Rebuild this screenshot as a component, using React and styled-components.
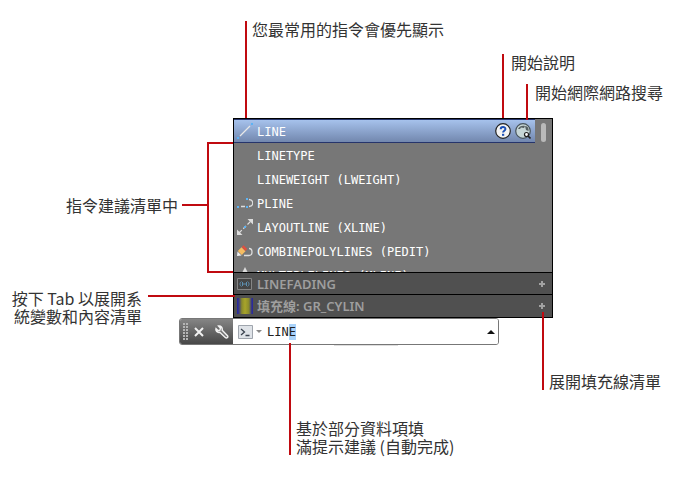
import React, { useState } from "react";
import styled, { createGlobalStyle } from "styled-components";

const GlobalStyle = createGlobalStyle`
  * {
    box-sizing: border-box;
  }

  body {
    margin: 0;
    background: #fff;
    color: #333;
    font-family: "Noto Sans CJK TC", "Noto Sans", sans-serif;
    font-size: 16px;
    line-height: 18px;
  }
`;

const commands = [
  { name: "LINE", icon: <LineIcon /> },
  { name: "LINETYPE" },
  { name: "LINEWEIGHT (LWEIGHT)" },
  { name: "PLINE", icon: <PlineIcon /> },
  { name: "LAYOUTLINE (XLINE)", icon: <XlineIcon /> },
  { name: "COMBINEPOLYLINES (PEDIT)", icon: <PeditIcon /> },
  { name: "MULTIPLELINES (MLINE)", icon: <ConeIcon /> },
];

function App() {
  const [value, setValue] = useState("LINE");

  return (
    <Page>
      <GlobalStyle />
      <Figure>
        <Suggestions>
          <CommandArea>
            <CommandList>
              {commands.map((item, index) => (
                <CommandRow key={item.name} $active={index === 0}>
                  <IconSlot>{item.icon}</IconSlot>
                  <CommandName>{item.name}</CommandName>
                  {index === 0 && (
                    <RowActions>
                      <RoundButton type="button" aria-label="說明">
                        <HelpIcon />
                      </RoundButton>
                      <RoundButton type="button" aria-label="網際網路搜尋">
                        <GlobeIcon />
                      </RoundButton>
                    </RowActions>
                  )}
                </CommandRow>
              ))}
            </CommandList>
            <ScrollTrack>
              <ScrollThumb />
            </ScrollTrack>
          </CommandArea>
          <Category type="button">
            <IconSlot>
              <VariableIcon />
            </IconSlot>
            <CategoryName>LINEFADING</CategoryName>
            <PlusIcon />
          </Category>
          <Category type="button">
            <IconSlot>
              <GradientIcon />
            </IconSlot>
            <CategoryName>填充線: GR_CYLIN</CategoryName>
            <PlusIcon />
          </Category>
        </Suggestions>

        <CommandLine>
          <BarTools>
            <GripIcon />
            <ToolButton type="button" aria-label="關閉">
              <CloseIcon />
            </ToolButton>
            <ToolButton type="button" aria-label="自訂">
              <WrenchIcon />
            </ToolButton>
          </BarTools>
          <Entry>
            <PromptButton type="button" aria-label="最近使用的指令">
              <PromptIcon />
            </PromptButton>
            <CommandInput
              aria-label="指令"
              value={value}
              onChange={(e) => setValue(e.target.value)}
            />
            <ToolButton type="button" aria-label="歷程記錄">
              <UpIcon />
            </ToolButton>
          </Entry>
        </CommandLine>
        <Underlay />

        <FrequentNote>您最常用的指令會優先顯示</FrequentNote>
        <HelpNote>開始說明</HelpNote>
        <SearchNote>開始網際網路搜尋</SearchNote>
        <ListNote>指令建議清單中</ListNote>
        <ListBracket />
        <TabNote>
          按下 Tab 以展開系
          <br />
          統變數和內容清單
        </TabNote>
        <HatchNote>展開填充線清單</HatchNote>
        <CompleteNote>
          基於部分資料項填
          <br />
          滿提示建議 (自動完成)
        </CompleteNote>
      </Figure>
    </Page>
  );
}

export default App;

function LineIcon() {
  return (
    <svg width="16" height="16" viewBox="0 0 16 16">
      <path d="M3 13L13 3" stroke="#e8e8e8" strokeWidth="1.3" />
      <path d="M0 14h2v2H0zM14 0h2v2h-2z" fill="#5cb3f5" />
    </svg>
  );
}

function PlineIcon() {
  return (
    <svg width="16" height="16" viewBox="0 0 16 16">
      <path d="M4 11.500h4M12 4.500c5 .5 5 6.500 0 7" stroke="#ddd" strokeWidth="1.300" fill="none" />
      <path d="M0 11h2v2H0zM9 11h2v2H9zM9 3h2v2H9z" fill="#5cb3f5" />
    </svg>
  );
}

function XlineIcon() {
  return (
    <svg width="16" height="16" viewBox="0 0 16 16">
      <path d="M2 14L14 2" stroke="#ddd" strokeWidth="1.2" strokeDasharray="4 2" />
      <path d="M16 0v5.500L10.500 0zM0 16v-5.500L5.500 16z" fill="#ddd" />
      <path d="M7 7h2v2H7z" fill="#5cb3f5" />
    </svg>
  );
}

function PeditIcon() {
  return (
    <svg width="16" height="16" viewBox="0 0 16 16">
      <path d="M7 12.500h5c4 0 4-7 0-7" stroke="#ddd" strokeWidth="1.300" fill="none" />
      <path d="M0 13l.5-4.500L4.500 12.500z" fill="#f2f2f2" />
      <path d="M.8 8L4.500 4.300l4 4L4.800 12z" fill="#f6bd62" />
      <path d="M4.800 4L6.500 2.300l3.700 3.700-1.700 1.900z" fill="#e0503f" />
    </svg>
  );
}

function ConeIcon() {
  return (
    <svg width="16" height="16" viewBox="0 0 16 16">
      <path d="M8 0l3 6H5z" fill="#ddd" />
    </svg>
  );
}

function HelpIcon() {
  return (
    <svg width="16" height="16" viewBox="0 0 16 16">
      <circle cx="8" cy="8" r="7.300" fill="#f4f4f4" stroke="#222" strokeWidth="1.200" />
      <path
        d="M5.700 6.200C5.700 3.200 10.400 3.200 10.400 6c0 1.700-2.300 1.700-2.300 3.600"
        fill="none"
        stroke="#1b4fb5"
        strokeWidth="2"
      />
      <path d="M7 10.800h2.200v2H7z" fill="#1b4fb5" />
    </svg>
  );
}

function GlobeIcon() {
  return (
    <svg width="16" height="16" viewBox="0 0 16 16">
      <circle cx="8" cy="8" r="7.300" fill="#c6d6d6" stroke="#47545c" strokeWidth="1.200" />
      <path d="M3 6c1-3 5-4 7-3l-1 2-3-.5L5 6zM10 3c3 0 4 3 3.500 5L11 7z" fill="#555f61" />
      <path d="M13 13l2.500 2.500" stroke="#222" strokeWidth="1.600" />
      <circle cx="11.500" cy="11.500" r="2" fill="#fff" stroke="#222" strokeWidth="1.200" />
    </svg>
  );
}

function VariableIcon() {
  return (
    <svg width="16" height="16" viewBox="0 0 16 16">
      <path d="M.5 2.500h14v11H.5z" fill="#454545" stroke="#858585" />
      <path
        d="M4.500 5.500c-2 1-2 4 0 5M10.500 5.500c2 1 2 4 0 5M5.500 6v4M9.500 6v4M6 8h3"
        fill="none"
        stroke="#5d8fb0"
      />
    </svg>
  );
}

function GradientIcon() {
  return (
    <svg width="16" height="16" viewBox="0 0 16 16">
      <defs>
        <linearGradient id="cylinder">
          <stop offset="0" stopColor="#2222a8" />
          <stop offset=".12" stopColor="#3a3a80" />
          <stop offset=".3" stopColor="#8a8a2c" />
          <stop offset=".5" stopColor="#a8a42a" />
          <stop offset=".75" stopColor="#8a8a2c" />
          <stop offset=".9" stopColor="#3a3a80" />
          <stop offset="1" stopColor="#2222a8" />
        </linearGradient>
      </defs>
      <path d="M0 0h16v16H0z" fill="url(#cylinder)" />
    </svg>
  );
}

function PlusIcon() {
  return (
    <svg width="6" height="6" viewBox="0 0 6 6">
      <path d="M2 0h2v2h2v2H4v2H2V4H0V2h2z" fill="#a2a2a2" />
    </svg>
  );
}

function GripIcon() {
  return (
    <svg width="5" height="18" viewBox="0 0 5 18">
      {[0, 3, 6, 9, 12, 15].map((y) => (
        <path key={y} d={`M0 ${y}h2v2H0zM3 ${y}h2v2H3z`} fill="#b5b5b5" />
      ))}
    </svg>
  );
}

function CloseIcon() {
  return (
    <svg width="10" height="10" viewBox="0 0 10 10">
      <path d="M1 1l8 8M9 1L1 9" stroke="#f2f2f2" strokeWidth="2" />
    </svg>
  );
}

function WrenchIcon() {
  return (
    <svg width="14" height="14" viewBox="0 0 14 14">
      <path
        d="M3.500 1l2 2.200-.6 1.900-1.900.5L1 3.600C.4 6 2.200 7.900 4.800 7.300l5.700 5.400c1.500 1 3-.6 2-2L7.200 5.200C7.700 2.500 6 .6 3.500 1z"
        fill="#777"
        stroke="#f2f2f2"
        strokeWidth="1.400"
      />
    </svg>
  );
}

function PromptIcon() {
  return (
    <svg width="24" height="14" viewBox="0 0 24 14">
      <path d="M.5.5h14v13H.5z" fill="#dfe3e8" stroke="#9fa5ad" />
      <path d="M3 4l3.500 3L3 10M7.500 10.500h4" fill="none" stroke="#39424e" strokeWidth="1.300" />
      <path d="M18 5h6l-3 3z" fill="#888" />
    </svg>
  );
}

function UpIcon() {
  return (
    <svg width="8" height="4" viewBox="0 0 8 4">
      <path d="M0 4l4-4 4 4z" fill="#111" />
    </svg>
  );
}

const Page = styled.main`
  display: grid;
  grid-template-columns: minmax(179px, 179fr) minmax(374px, 374fr) minmax(
      124px,
      124fr
    );
  padding: 118px 0 132px;
`;

/* Callouts are anchored to this box so that they follow the panel. */
const Figure = styled.section`
  grid-column: 2;
  position: relative;
`;

const Suggestions = styled.div`
  margin-left: 54px;
  border: 1px solid #000;
  background: #000;
  display: flex;
  flex-direction: column;
  gap: 1px;
`;

const CommandArea = styled.div`
  display: flex;
  height: 153px;
  overflow: hidden;
  background: #777;
`;

const CommandList = styled.ul`
  flex: 1;
  margin: 0;
  padding: 0;
  list-style: none;
`;

const CommandRow = styled.li`
  display: flex;
  align-items: center;
  height: 24px;
  padding: 0 4px 0 3px;
  color: #fff;
  border: solid ${(p) => (p.$active ? "#26346b" : "transparent")};
  border-width: 1px 0;
  background: ${(p) =>
    p.$active ? "linear-gradient(#a6c2ec, #7287ae)" : "transparent"};
`;

const IconSlot = styled.span`
  display: flex;
  flex: none;
  width: 20px;
`;

const CommandName = styled.span`
  flex: 1;
  padding-top: 2px;
  font-family: "DejaVu Sans Mono", monospace;
  font-size: 12px;
  white-space: pre;
`;

const RowActions = styled.span`
  display: flex;
  gap: 4px;
`;

const RoundButton = styled.button`
  display: flex;
  padding: 0;
  border: 0;
  border-radius: 50%;
  background: none;
`;

const ScrollTrack = styled.div`
  width: 17px;
  padding: 4px 6px;
`;

const ScrollThumb = styled.div`
  height: 19px;
  border-radius: 3px;
  background: #b9b9b9;
`;

const Category = styled.button`
  display: flex;
  align-items: center;
  height: 21px;
  padding: 0 7px 0 3px;
  border: 0;
  background: #505050;
  color: #9e9e9e;
  font-family: "Noto Sans", "Noto Sans CJK TC", sans-serif;
  font-size: 13px;
  font-weight: 600;
  line-height: 20px;
  text-align: left;

  &:last-child {
    height: 22px;
  }
`;

const CategoryName = styled.span`
  flex: 1;
`;

const CommandLine = styled.div`
  display: flex;
  height: 27px;
  margin-right: 54px;
  border: 1px solid #777;
  border-radius: 3px;
  overflow: hidden;
`;

const BarTools = styled.div`
  display: flex;
  align-items: center;
  flex: none;
  width: 53px;
  padding-left: 3px;
  gap: 6px;
  background: linear-gradient(#858585, #484848);

  > :last-child {
    margin-left: 5px;
  }
`;

const ToolButton = styled.button`
  display: flex;
  padding: 0;
  border: 0;
  background: none;
`;

const Entry = styled.div`
  display: flex;
  align-items: center;
  flex: 1;
  min-width: 0;
  padding: 0 3px 0 5px;
  background: #fff;
`;

const PromptButton = styled(ToolButton)`
  margin-right: 5px;
`;

/* The completed last letter is shown on a blue band, three letters in. */
const CommandInput = styled.input`
  flex: 1;
  min-width: 0;
  height: 16px;
  padding: 0;
  border: 0;
  outline: 0;
  background: linear-gradient(#a9d3fb, #a9d3fb) 3ch 0 / 1ch 100% no-repeat;
  color: #222;
  font-family: "DejaVu Sans Mono", monospace;
  font-size: 12px;
  line-height: 16px;
`;

const Underlay = styled.div`
  width: 64px;
  height: 1px;
  margin-left: 155px;
  background: #ddd;
`;

const Note = styled.p`
  position: absolute;
  margin: 0;
  white-space: nowrap;
`;

/* A vertical leader on the left of the text. */
const LeaderNote = styled(Note)`
  padding-left: 5px;
  border-left: 2px solid #c00a10;
`;

const TopNote = styled(LeaderNote)`
  line-height: 16px;
`;

const FrequentNote = styled(TopNote)`
  left: 66px;
  top: -97px;
  height: 97px;
`;

const HelpNote = styled(TopNote)`
  right: -22px;
  top: -64px;
  height: 64px;
  padding-left: 7px;
`;

const SearchNote = styled(TopNote)`
  right: -110px;
  top: -34px;
  height: 36px;
  padding-left: 7px;
`;

const ListNote = styled(Note)`
  right: 100%;
  top: 78px;
  padding-right: 1px;

  &::after {
    content: "";
    position: absolute;
    top: 8px;
    left: 100%;
    width: 26px;
    height: 2px;
    margin-left: 3px;
    background: #c00a10;
  }
`;

const ListBracket = styled.span`
  position: absolute;
  left: 28px;
  top: 24px;
  width: 26px;
  height: 131px;
  border: 2px solid #c00a10;
  border-right: 0;
`;

const TabNote = styled(Note)`
  right: 100%;
  top: 171px;
  padding-right: 37px;
  text-align: right;

  &::after {
    content: "";
    position: absolute;
    top: 6px;
    right: -56px;
    width: 87px;
    height: 2px;
    background: #c00a10;
  }
`;

const HatchNote = styled(LeaderNote)`
  right: -108px;
  top: 194px;
  height: 78px;
  display: flex;
  align-items: flex-end;
`;

const CompleteNote = styled(LeaderNote)`
  left: 110px;
  top: 225px;
  height: 112px;
  display: flex;
  align-items: flex-end;
`;
